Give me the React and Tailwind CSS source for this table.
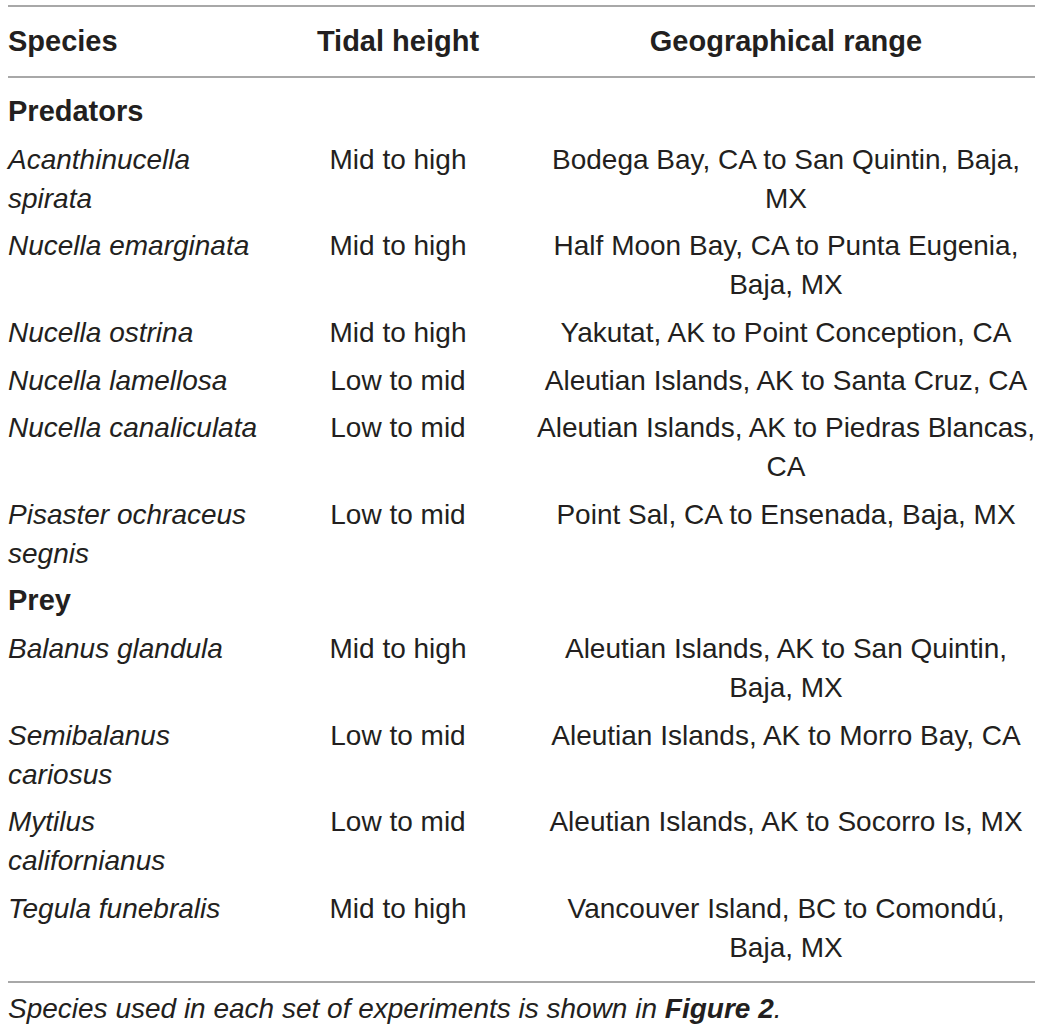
import React from "react";

const rows = [
  { type: "cat", label: "Predators" },
  { sp: ["Acanthinucella", "spirata"], tide: "Mid to high", range: ["Bodega Bay, CA to San Quintin, Baja,", "MX"] },
  { sp: ["Nucella emarginata"], tide: "Mid to high", range: ["Half Moon Bay, CA to Punta Eugenia,", "Baja, MX"] },
  { sp: ["Nucella ostrina"], tide: "Mid to high", range: ["Yakutat, AK to Point Conception, CA"] },
  { sp: ["Nucella lamellosa"], tide: "Low to mid", range: ["Aleutian Islands, AK to Santa Cruz, CA"] },
  { sp: ["Nucella canaliculata"], tide: "Low to mid", range: ["Aleutian Islands, AK to Piedras Blancas,", "CA"] },
  { sp: ["Pisaster ochraceus", "segnis"], tide: "Low to mid", range: ["Point Sal, CA to Ensenada, Baja, MX"] },
  { type: "cat", label: "Prey" },
  { sp: ["Balanus glandula"], tide: "Mid to high", range: ["Aleutian Islands, AK to San Quintin,", "Baja, MX"] },
  { sp: ["Semibalanus", "cariosus"], tide: "Low to mid", range: ["Aleutian Islands, AK to Morro Bay, CA"] },
  { sp: ["Mytilus", "californianus"], tide: "Low to mid", range: ["Aleutian Islands, AK to Socorro Is, MX"] },
  { sp: ["Tegula funebralis"], tide: "Mid to high", range: ["Vancouver Island, BC to Comondú,", "Baja, MX"] },
];

function Lines({ lines }) {
  return lines.map((l, i) => (
    <div key={i} className="whitespace-nowrap">
      {l}
    </div>
  ));
}

export default function App() {
  return (
    <div
      className="bg-white min-h-[1032px] w-[1042px] pt-[5px] px-[8px] text-[#231f20]"
      style={{ fontFamily: '"Liberation Sans", Arial, sans-serif' }}
    >
      <div className="w-[1027px]">
        <div className="grid grid-cols-[262px_267px_498px] border-t-2 border-b-2 border-[#a8a8a8] py-[15px] text-[29px] leading-[39px] font-bold">
          <div>Species</div>
          <div className="text-center pr-[11px]">Tidal height</div>
          <div className="text-center">Geographical range</div>
        </div>
        <div className="py-[10px] border-b-2 border-[#a8a8a8] text-[28px] leading-[39px]">
          {rows.map((r, i) =>
            r.type === "cat" ? (
              <div key={i} className="py-[4.3px] font-bold text-[29px]">
                {r.label}
              </div>
            ) : (
              <div key={i} className="grid grid-cols-[262px_267px_498px] py-[4.3px]">
                <div className="italic">
                  <Lines lines={r.sp} />
                </div>
                <div className="text-center pr-[11px]">{r.tide}</div>
                <div className="text-center">
                  <Lines lines={r.range} />
                </div>
              </div>
            )
          )}
        </div>
        <div className="mt-[9px] text-[28px] leading-[34px] italic whitespace-nowrap">
          Species used in each set of experiments is shown in <span className="font-bold">Figure 2</span>.
        </div>
      </div>
    </div>
  );
}
